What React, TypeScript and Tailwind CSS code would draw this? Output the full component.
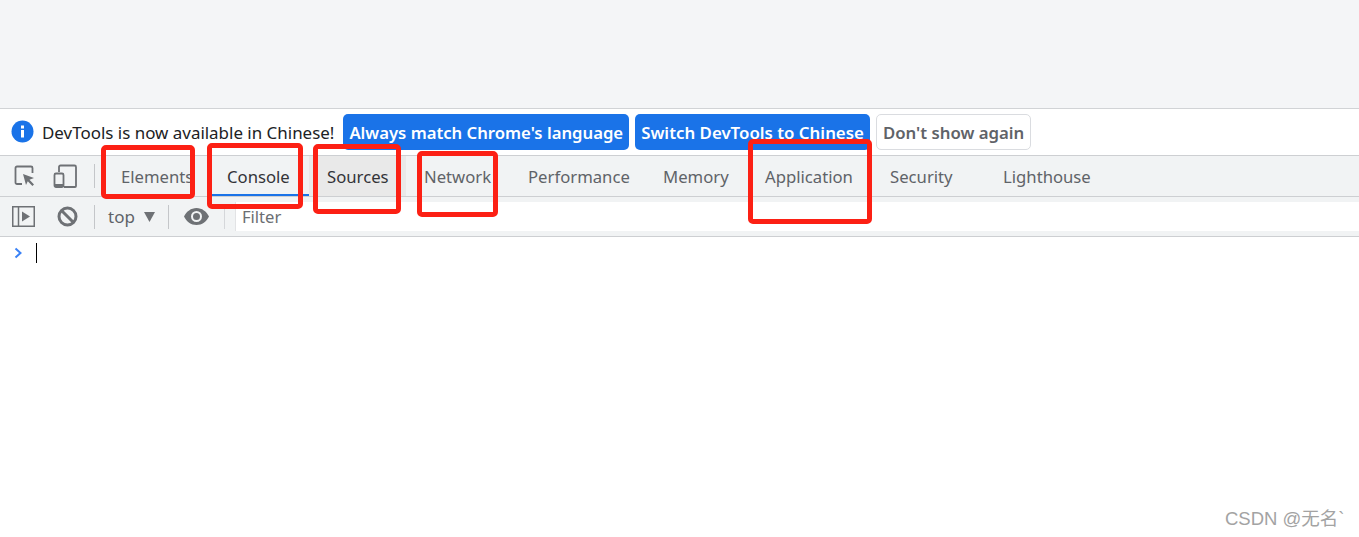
const font = "[font-family:'Noto_Sans','Noto_Sans_CJK_SC',sans-serif]";

function Tab({ label, active, hover, width }: { label: string; active?: boolean; hover?: boolean; width: string }) {
  return (
    <div
      className={`relative flex h-full items-center pl-[18px] pt-[2px] text-[16.7px] ${width} ${active || hover ? "text-[#333438]" : "text-[#5f6368]"} ${hover ? "bg-[#e9e9e9]" : ""}`}
    >
      {label}
      {active && <div className="absolute bottom-0 left-[3px] right-0 h-[2px] bg-[#1a73e8]" />}
    </div>
  );
}

function RedBox({ cls }: { cls: string }) {
  return <div className={`absolute rounded-[5px] border-[5px] border-[#fc2014] ${cls}`} />;
}

export default function App() {
  return (
    <div className={`relative h-[537px] w-[1359px] overflow-hidden bg-white ${font}`}>
      <div className="h-[109px] border-b border-[#d1d3d6] bg-[#f4f5f7]" />

      <div className="flex h-[46px] items-center bg-white pl-[11px] pb-[1px]">
        <svg width="23" height="23" viewBox="0 0 23 23" className="shrink-0">
          <circle cx="11.5" cy="11.5" r="11" fill="#1a73e8" />
          <rect x="10" y="10" width="3" height="7.5" fill="#fff" />
          <rect x="10" y="5.5" width="3" height="3" fill="#fff" />
        </svg>
        <span className="ml-[8px] pt-[2px] text-[16.95px] text-[#202124]">DevTools is now available in Chinese!</span>
        <div className="ml-[9px] flex h-[36px] items-center rounded-[5px] bg-[#1a73e8] px-[6px] pt-[2px] text-[16.7px] font-semibold text-white">Always match Chrome's language</div>
        <div className="ml-[6px] flex h-[36px] items-center rounded-[5px] bg-[#1a73e8] px-[6px] pt-[2px] text-[16.85px] font-semibold text-white">Switch DevTools to Chinese</div>
        <div className="ml-[6px] flex h-[36px] items-center rounded-[5px] border border-[#dadce0] bg-white px-[6px] pt-[2px] text-[16.8px] font-semibold text-[#5f6368]">Don't show again</div>
      </div>

      <div className="flex h-[42px] items-center border-y border-[#cdcfd2] bg-[#f1f3f4]">
        <div className="flex w-[94px] shrink-0 items-center pl-[14px]">
          <svg width="22" height="22" viewBox="0 0 22 22" fill="none">
            <path d="M8 19H3a1.5 1.5 0 0 1-1.5-1.5V3A1.5 1.5 0 0 1 3 1.5h14A1.5 1.5 0 0 1 18.500 3v5" stroke="#6e7175" strokeWidth="1.800" />
            <path d="M9 9l11 4-4.500 1.800 4.500 4.700-1.600 1.500-4.600-4.700L12 20z" fill="#6e7175" />
          </svg>
          <svg className="ml-[17px]" width="24" height="24" viewBox="0 0 24 24" fill="none">
            <path d="M6 8V3a1.500 1.500 0 0 1 1.500-1.500h14A1.500 1.500 0 0 1 23 3v19a1 1 0 0 1-1 1H11" stroke="#6e7175" strokeWidth="1.800" />
            <rect x="1.500" y="9.500" width="9" height="13.500" rx="1.500" stroke="#6e7175" strokeWidth="1.800" />
            <rect x="1" y="20" width="10" height="3" fill="#6e7175" />
          </svg>
        </div>
        <div className="h-[24px] w-px shrink-0 bg-[#c4c6c9]" />
        <div className="ml-[8px] flex h-full items-center">
          <Tab label="Elements" width="w-[106px]" />
          <Tab label="Console" active width="w-[100px]" />
          <Tab label="Sources" hover width="w-[97px]" />
          <Tab label="Network" width="w-[104px]" />
          <Tab label="Performance" width="w-[135px]" />
          <Tab label="Memory" width="w-[102px]" />
          <Tab label="Application" width="w-[125px]" />
          <Tab label="Security" width="w-[113px]" />
          <Tab label="Lighthouse" width="w-[123px]" />
        </div>
      </div>

      <div className="flex h-[40px] items-center border-b border-[#cdcfd2] bg-[#f1f3f4]">
        <svg className="ml-[12px] shrink-0" width="23" height="21" viewBox="0 0 23 21" fill="none">
          <rect x="0.750" y="0.750" width="21.500" height="19.500" stroke="#6e7175" strokeWidth="1.500" />
          <path d="M6.500 1v19" stroke="#6e7175" strokeWidth="1.500" />
          <path d="M10 5.500l8 5-8 5z" fill="#6e7175" />
        </svg>
        <svg className="ml-[22px] shrink-0" width="21" height="21" viewBox="0 0 21 21" fill="none">
          <circle cx="10.500" cy="10.500" r="8.500" stroke="#6e7175" strokeWidth="3" />
          <path d="M4.500 4.500l12 12" stroke="#6e7175" strokeWidth="3" />
        </svg>
        <div className="ml-[16px] h-[24px] w-px shrink-0 bg-[#c4c6c9]" />
        <span className="ml-[13px] text-[17px] text-[#5f6368]">top</span>
        <svg className="ml-[9px] shrink-0" width="11" height="10" viewBox="0 0 11 10">
          <path d="M0 0h11L5.500 10z" fill="#6e7175" />
        </svg>
        <div className="ml-[13px] h-[24px] w-px shrink-0 bg-[#c4c6c9]" />
        <svg className="ml-[15px] shrink-0" width="25" height="17" viewBox="0 0 25 17">
          <path fillRule="evenodd" d="M12.500 0C7 0 2.500 3.500 0 8.500 2.500 13.500 7 17 12.500 17S22.500 13.500 25 8.500C22.500 3.500 18 0 12.500 0zm0 14a5.500 5.500 0 1 1 0-11 5.500 5.500 0 0 1 0 11zm0-9a3.500 3.500 0 1 0 0 7 3.500 3.500 0 0 0 0-7z" fill="#6e7175" />
        </svg>
        <div className="ml-[15px] h-[24px] w-px shrink-0 bg-[#d5d7da]" />
        <div className="ml-[10px] flex h-[29px] flex-1 items-center border-l border-[#e2e3e5] bg-white pl-[6px] pt-[2px] text-[16.6px] text-[#6b6e72]">Filter</div>
      </div>

      <div className="relative h-[300px] bg-white">
        <svg className="absolute left-[14px] top-[10px]" width="9" height="12" viewBox="0 0 9 12" fill="none">
          <path d="M1.500 1.500l5 4.500-5 4.500" stroke="#3b82f6" strokeWidth="2" />
        </svg>
        <div className="absolute left-[36px] top-[6px] h-[20px] w-px bg-black" />
      </div>

      <RedBox cls="left-[101px] top-[145px] h-[54px] w-[94px]" />
      <RedBox cls="left-[207px] top-[143px] h-[66px] w-[96px]" />
      <RedBox cls="left-[313px] top-[144px] h-[70px] w-[88px]" />
      <RedBox cls="left-[417px] top-[151px] h-[66px] w-[81px]" />
      <RedBox cls="left-[748px] top-[139px] h-[85px] w-[124px]" />

      <div className="absolute left-[1225px] top-[505px] [font-family:'Liberation_Sans','Noto_Sans_CJK_SC',sans-serif] text-[18.5px] text-[#a3a3a3]">CSDN @无名`</div>
    </div>
  );
}
